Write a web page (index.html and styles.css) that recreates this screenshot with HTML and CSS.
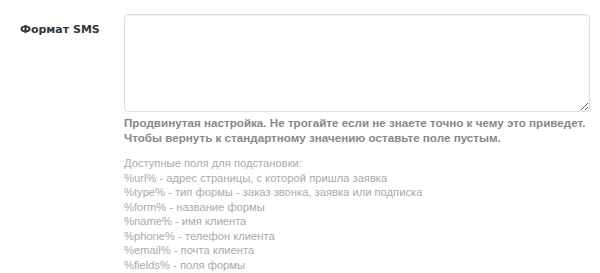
FILE: index.html
```html
<!DOCTYPE html>
<html lang="ru">
<head>
<meta charset="utf-8">
<link rel="stylesheet" href="styles.css">
</head>
<body>
<div class="row">
  <div class="label">Формат SMS</div>
  <div class="field">
    <textarea class="sms"></textarea>
    <p class="desc">Продвинутая настройка. Не трогайте если не знаете точно к чему это приведет.<br>Чтобы вернуть к стандартному значению оставьте поле пустым.</p>
    <p class="vars">Доступные поля для подстановки:<br>%url% - адрес страницы, с которой пришла заявка<br>%type% - тип формы - заказ звонка, заявка или подписка<br>%form% - название формы<br>%name% - имя клиента<br>%phone% - телефон клиента<br>%email% - почта клиента<br>%fields% - поля формы</p>
  </div>
</div>
</body>
</html>
```
FILE: styles.css
```css
html, body {
  margin: 0;
  padding: 0;
  background: #fff;
}
body {
  font-family: "Liberation Sans", Arial, sans-serif;
  font-size: 13px;
  color: #333;
}
.row {
  display: flex;
  padding-top: 14px;
}
.label {
  box-sizing: border-box;
  width: 124px;
  padding: 8px 0 0 20px;
  font-family: "DejaVu Sans", Verdana, sans-serif;
  font-size: 11px;
  font-weight: bold;
  color: #32373c;
  line-height: 16px;
}
.field {
  flex: 1;
}
.sms {
  display: block;
  box-sizing: border-box;
  width: 466px;
  height: 98px;
  margin: 0;
  border: 1px solid #ddd;
  border-radius: 4px;
  box-shadow: inset 0 1px 2px rgba(0,0,0,0.07);
  background: #fff;
}
.desc {
  margin: 3px 0 0;
  font-size: 11.65px;
  font-weight: bold;
  color: #888;
  line-height: 15px;
  white-space: nowrap;
}
.vars {
  margin: 11px 0 0;
  font-size: 11.2px;
  color: #aaa;
  line-height: 14.5px;
  white-space: nowrap;
}
```
